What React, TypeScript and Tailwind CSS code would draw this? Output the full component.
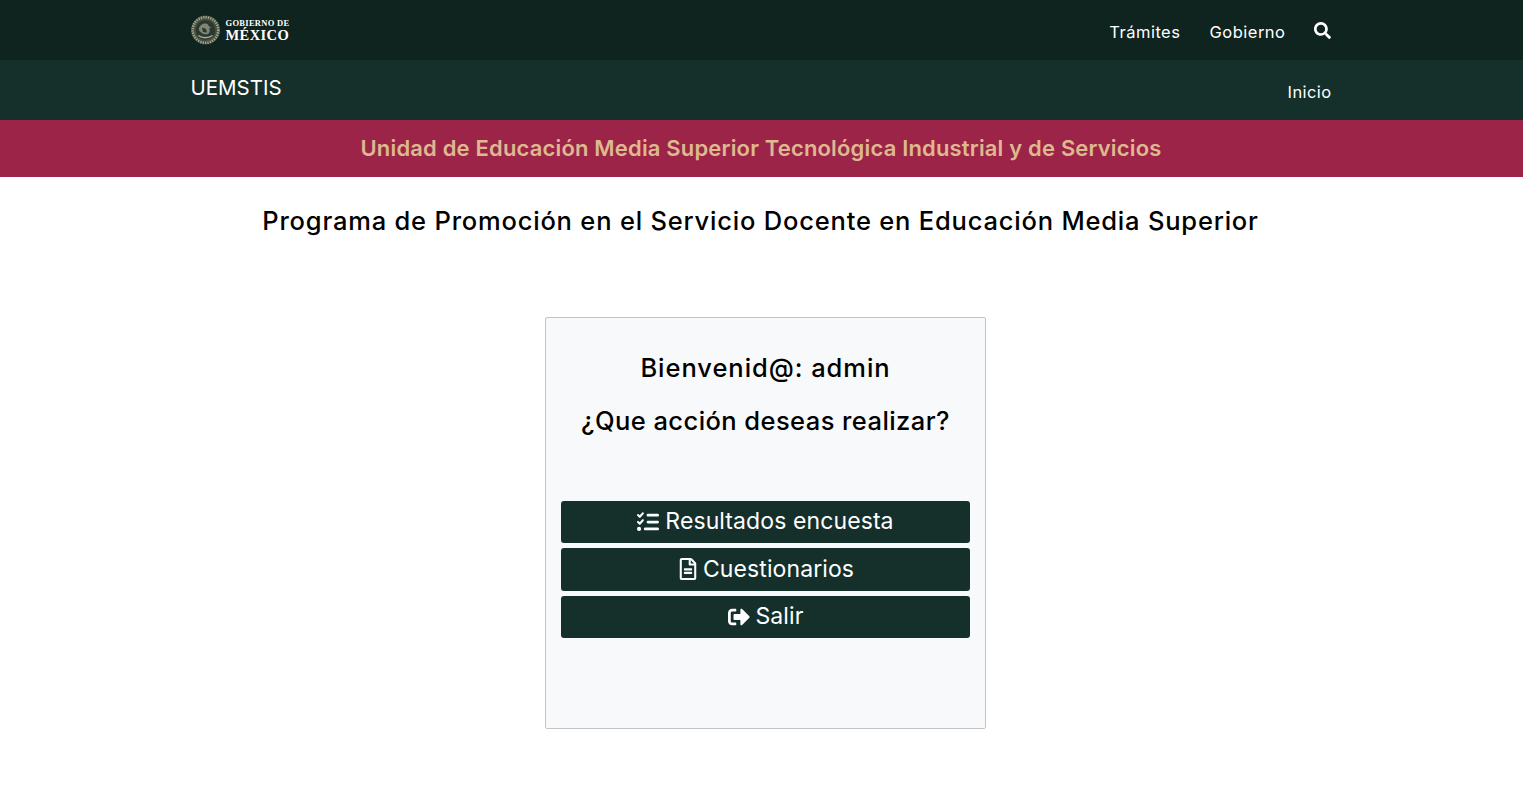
import React from "react";
import { FaListCheck } from "react-icons/fa6";
import { FaRegFileAlt, FaSignOutAlt, FaSearch } from "react-icons/fa";

const sans = "font-['Inter','Liberation_Sans',sans-serif]";

function Emblem() {
  return (
    <svg width="29" height="30" viewBox="0 0 29 30" className="-ml-[1px] shrink-0">
      <circle cx="14.500" cy="15" r="14.500" fill="#47503f" />
      <circle cx="14.500" cy="15" r="12.800" fill="none" stroke="#a3a793" strokeWidth="2.600" strokeDasharray="1.300 1.100" />
      <circle cx="14.500" cy="15" r="9.800" fill="#2a3830" />
      <path d="M8 13c1-3 4-5 7-4.500 2 .5 2.500 2 3 3l2.500.8-2.300 1c1 2.500.5 4.700-1.200 5.700-2 .8-5 .3-7-1.500-1.500-1.300-2.400-2.800-2-4.500z" fill="#7e8574" />
      <path d="M11 12.500l4 1.500 1 3.500-4-.5z" fill="#2a3830" />
      <path d="M7.500 20.500c3.500 3 10 3 14 0" fill="none" stroke="#a8ac98" strokeWidth="1.400" />
    </svg>
  );
}

function ActionButton({ icon, label, tall, gap }: { icon: React.ReactNode; label: string; tall?: boolean; gap: string }) {
  return (
    <button className={`flex w-full items-center justify-center rounded-[3px] bg-[#15302b] pb-[1px] text-[23px] tracking-[0.1px] text-white ${gap} ${tall ? "h-[43px]" : "h-[42px]"}`}>
      {icon}
      <span>{label}</span>
    </button>
  );
}

export default function App() {
  return (
    <div className={`min-h-[801px] bg-white ${sans}`}>
      <header className="h-[60px] bg-[#0f231f]">
        <div className="mx-auto flex h-full w-[1140px] items-center justify-between">
          <div className="flex items-center gap-[6px]">
            <Emblem />
            <div className="font-['Liberation_Serif',serif] font-bold leading-none text-white">
              <div className="text-[8.500px] leading-[9px] tracking-[0.3px]">GOBIERNO DE</div>
              <div className="text-[14.500px] leading-[14px] tracking-[0.4px]">MÉXICO</div>
            </div>
          </div>
          <nav className="mr-[1px] flex items-center text-[16.500px] tracking-[0.5px] text-white">
            <span className="mt-[4px]">Trámites</span>
            <span className="ml-[29px] mt-[4px]">Gobierno</span>
            <FaSearch className="ml-[28px] mt-[1px] text-[17px]" />
          </nav>
        </div>
      </header>
      <div className="h-[60px] bg-[#15302b]">
        <div className="mx-auto flex h-full w-[1140px] justify-between">
          <span className="mt-[15px] -ml-[1px] text-[20.500px] leading-[26px] text-white">UEMSTIS</span>
          <span className="mt-[22px] text-[16.500px] leading-[20px] tracking-[0.4px] text-white">Inicio</span>
        </div>
      </div>
      <div className="flex h-[57px] items-center justify-center bg-[#9d2449] pr-[1px] text-[22px] font-semibold tracking-[0.17px] text-[#ddb98f]">
        Unidad de Educación Media Superior Tecnológica Industrial y de Servicios
      </div>
      <h1 className="mt-[29px] pr-[2px] text-center text-[25.500px] font-medium leading-[30px] tracking-[0.8px] text-black">
        Programa de Promoción en el Servicio Docente en Educación Media Superior
      </h1>
      <main className="ml-[545px] mt-[81px] flex h-[412px] w-[441px] flex-col rounded-[2px] border border-[#c4c4c4] bg-[#f8f9fa] px-[15px]">
        <h2 className="mt-[35px] text-center text-[25.500px] font-medium leading-[30px] tracking-[0.95px] text-black">Bienvenid@: admin</h2>
        <h2 className="mt-[23px] text-center text-[25.500px] font-medium leading-[30px] tracking-[0.43px] text-black">¿Que acción deseas realizar?</h2>
        <div className="mt-[65px] flex flex-col gap-[5px]">
          <ActionButton gap="gap-[6px]" icon={<FaListCheck className="text-[22px]" />} label="Resultados encuesta" />
          <ActionButton gap="gap-[4px]" tall icon={<FaRegFileAlt className="text-[22px]" />} label="Cuestionarios" />
          <ActionButton gap="gap-[6px]" icon={<FaSignOutAlt className="text-[22px]" />} label="Salir" />
        </div>
      </main>
    </div>
  );
}
